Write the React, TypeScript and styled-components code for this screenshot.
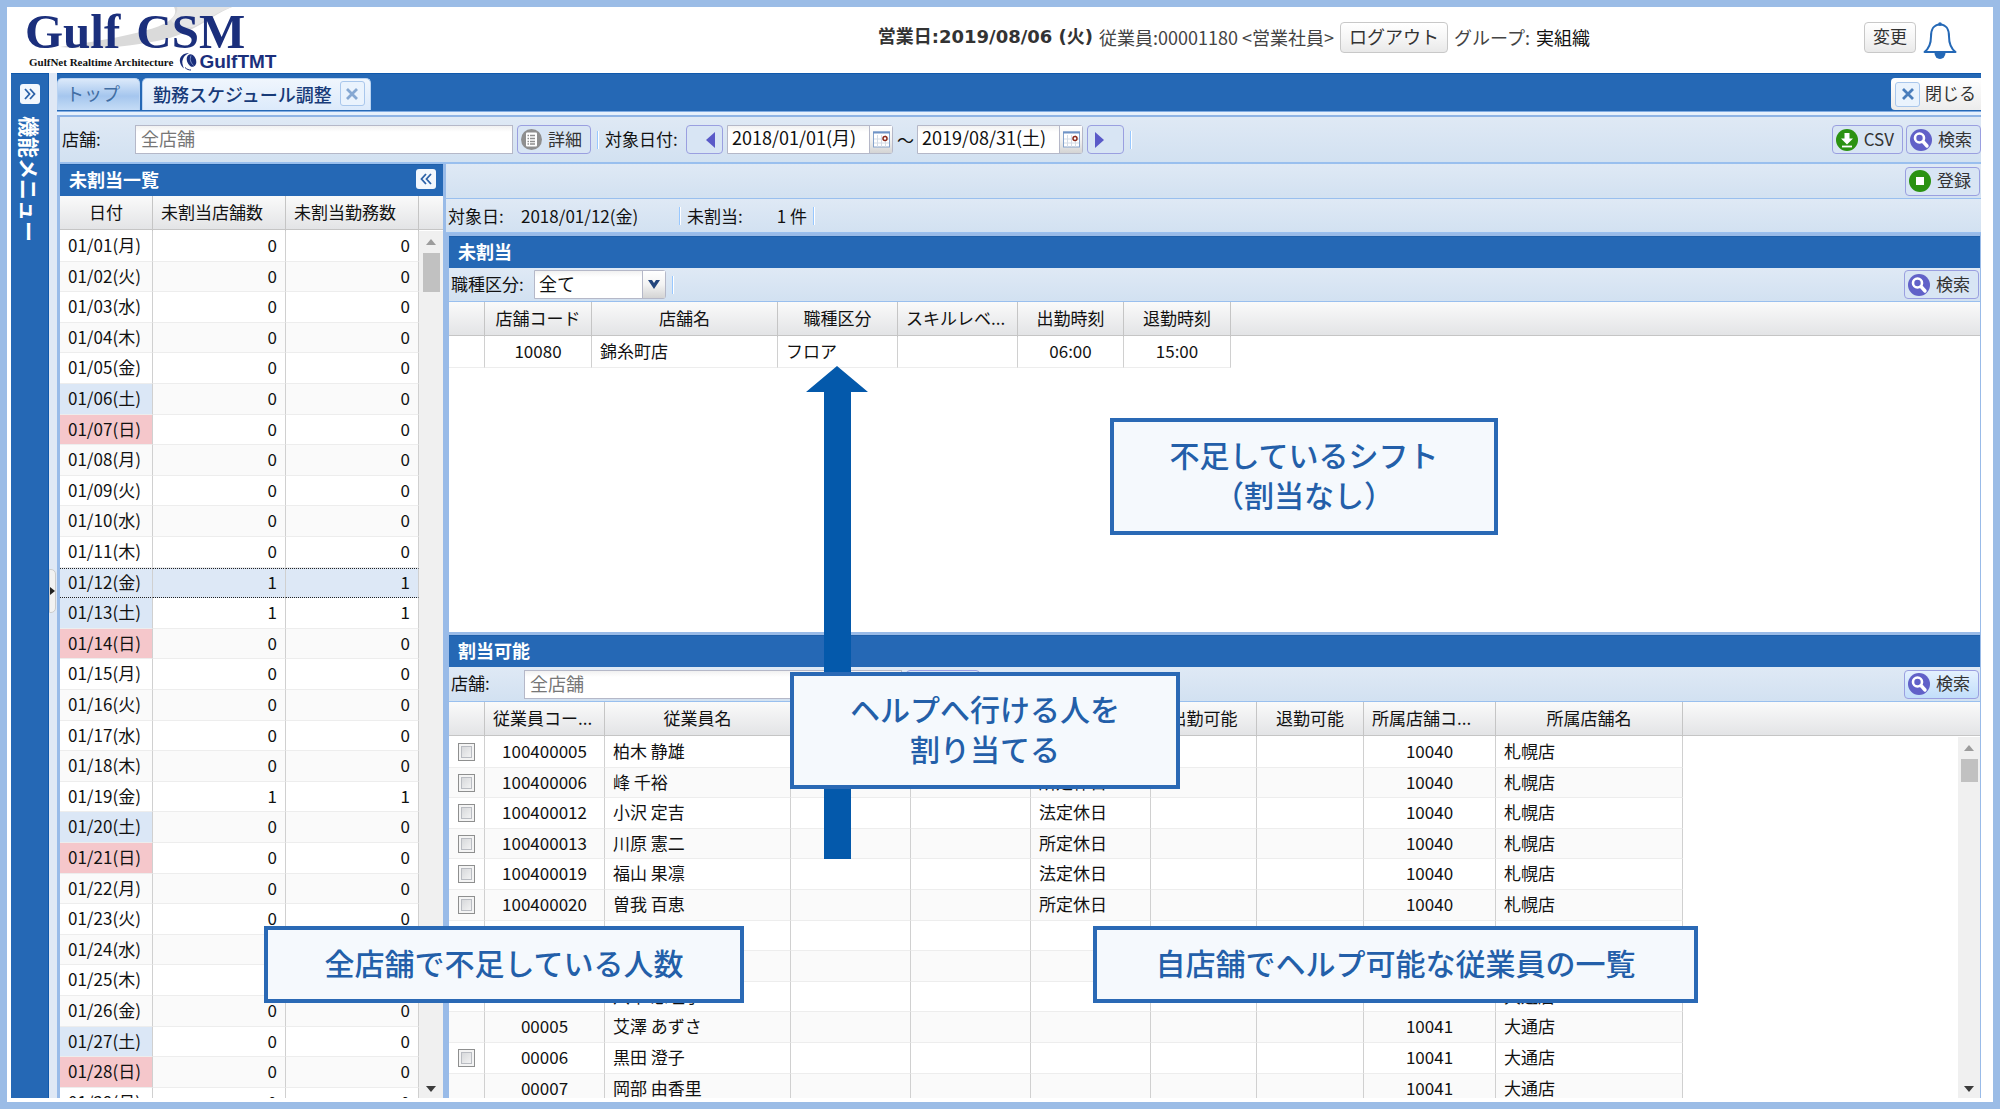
import React from "react";
import styled, { createGlobalStyle, css } from "styled-components";

const uiFont = `"Noto Sans CJK JP", "Noto Sans", sans-serif`;

const GlobalStyle = createGlobalStyle`
  * { box-sizing: border-box; }
  html, body { margin: 0; padding: 0; }
  body { font-family: ${uiFont}; font-size: 17px; line-height: 24px; color: #111; }
  button, input, select { font: inherit; color: inherit; margin: 0; }
  button { cursor: pointer; }
`;

const Frame = styled.div`
  position: relative;
  display: flex;
  flex-direction: column;
  height: 100vh;
  overflow: hidden;
  border: 7px solid #9bbce6;
  background: #fff;
  padding: 0 12px 4px 4px;
`;

/* ---------- header ---------- */

const Header = styled.header`
  display: flex;
  align-items: center;
  height: 66px;
  padding-bottom: 6px;
`;

const Logo = styled.div`
  position: relative;
  flex: 0 0 44%;
  align-self: flex-start;
  padding-left: 14px;
`;

const Swoosh = styled.svg`
  position: absolute;
  left: 46px;
  top: 0;
`;

const LogoName = styled.div`
  position: relative;
  display: flex;
  gap: 16px;
  font: 700 49px/42px "Liberation Serif", serif;
  color: #1b2f7c;
  padding-top: 4px;
`;

const LogoSub = styled.div`
  display: flex;
  align-items: center;
  gap: 6px;
  height: 18px;
  padding-left: 4px;
  font: 700 11px/16px "Liberation Serif", serif;
  color: #111;
`;

const LogoBrand = styled.span`
  display: flex;
  align-items: center;
  font: 700 19px/18px "Liberation Sans", sans-serif;
  color: #1b2f7c;
`;

const SessionInfo = styled.div`
  display: flex;
  align-items: center;
  gap: 6px;
  color: #444;
  font-size: 18px;
  white-space: nowrap;
`;

const BusinessDay = styled.strong`
  font-family: "DejaVu Sans", "Noto Sans CJK JP", sans-serif;
  font-weight: 700;
  color: #333;
`;

const GroupName = styled.span`
  color: #111;
`;

const HeaderActions = styled.div`
  display: flex;
  align-items: center;
  gap: 7px;
  margin-left: auto;
  padding-right: 24px;
`;

const PlainButton = styled.button`
  height: 31px;
  padding: 0 8px 2px;
  border: 1px solid #c8c8c8;
  border-radius: 4px;
  background: linear-gradient(#fff, #f6f6f6 50%, #e9e9e9);
  color: #333;
  line-height: 26px;
`;

const BellButton = styled.button`
  display: flex;
  padding: 8px 0 0;
  border: 0;
  background: none;
`;

/* ---------- frame of the application ---------- */

const Body = styled.div`
  display: flex;
  flex: 1;
  min-height: 0;
`;

const SideMenu = styled.nav`
  display: flex;
  flex-direction: column;
  align-items: center;
  gap: 12px;
  width: 38px;
  padding-top: 10px;
  background: #2568b5;
  border-top: 1px solid #0f58ab;
  border-right: 1px solid #0f58ab;
`;

const ToolSquare = styled.button`
  display: flex;
  align-items: center;
  justify-content: center;
  width: 20px;
  height: 20px;
  padding: 0;
  border: 0;
  border-radius: 3px;
  background: #f2f7fd;
`;

const SideTitle = styled.span`
  writing-mode: vertical-rl;
  text-orientation: sideways;
  font-weight: 700;
  font-size: 21px;
  color: #fff;
`;

const Splitter = styled.div`
  display: flex;
  flex-direction: column;
  justify-content: center;
  width: 8px;
  background: #dfe8f5;
  padding-top: 10px;
`;

const SplitHandle = styled.button`
  width: 7px;
  height: 44px;
  padding: 0;
  border: 1px solid #ccc;
  border-radius: 0 5px 5px 0;
  background: #f2f2f2;
  display: flex;
  align-items: center;
`;

const Workspace = styled.div`
  display: flex;
  flex-direction: column;
  flex: 1;
  min-width: 0;
  border-left: 3px solid #99bbe8;
`;

const TabBar = styled.div`
  display: flex;
  align-items: flex-end;
  gap: 2px;
  height: 38px;
  margin-left: -3px;
  padding-bottom: 1px;
  background: #2568b5;
  border-top: 1px solid #0f58ab;
`;

const Tab = styled.button<{ $active?: boolean }>`
  display: flex;
  align-items: center;
  gap: 8px;
  height: 32px;
  border: 1px solid #b9d3f2;
  border-bottom: 0;
  border-radius: 5px 5px 0 0;
  line-height: 28px;
  font-size: 18px;
  ${(p) =>
    p.$active
      ? css`
          padding: 0 5px 2px 10px;
          background: linear-gradient(#f0f6fd, #dceafb);
          color: #173a78;
          font-weight: 500;
        `
      : css`
          padding: 0 19px 4px 8px;
          background: linear-gradient(#dbe9fa, #a5c6ee 55%, #c5dcf6);
          color: #416da3;
        `}
`;

const CloseBox = styled.span`
  display: flex;
  align-items: center;
  justify-content: center;
  width: 25px;
  height: 25px;
  border: 1px solid #a9c7ec;
  border-radius: 3px;
  background: #eaf3fd;
`;

const CloseAll = styled.button`
  display: flex;
  align-items: center;
  gap: 5px;
  height: 32px;
  margin-left: auto;
  padding: 0 5px 0 4px;
  border: 0;
  border-radius: 4px 0 0 4px;
  background: linear-gradient(#fff, #ececec);
  color: #333;
`;

const TabStrip = styled.div`
  height: 6px;
  margin-left: -3px;
  background: #e6f0fc;
  border-top: 1px solid #7fabe3;
  border-bottom: 2px solid #8fb4e5;
`;

const Toolbar = styled.div<{ $height: number; $line?: number }>`
  display: flex;
  align-items: center;
  gap: 4px;
  flex: none;
  height: ${(p) => p.$height}px;
  padding-left: 2px;
  background: linear-gradient(#dfe9f5, #d2e1f1);
  border-bottom: ${(p) => p.$line ?? 1}px solid #99bfee;
  white-space: nowrap;
`;

const FieldLabel = styled.label<{ $width?: number }>`
  width: ${(p) => (p.$width ? `${p.$width}px` : "auto")};
  padding: 0 3px 2px 0;
`;

const Readout = styled.span<{ $width: number; $end?: boolean }>`
  width: ${(p) => p.$width}px;
  text-align: ${(p) => (p.$end ? "right" : "left")};
`;

const TextInput = styled.input<{ $width: number }>`
  width: ${(p) => p.$width}px;
  height: 29px;
  padding: 0 5px 3px;
  border: 1px solid #b5b8c8;
  background: linear-gradient(#f1f1f1, #fff 6px);
  font-size: 18px;
  &::placeholder { color: #777; opacity: 1; }
`;

const FieldGroup = styled.div<{ $width: number }>`
  display: flex;
  width: ${(p) => p.$width}px;
  height: 29px;
  border: 1px solid #b5b8c8;
  border-radius: 0 3px 3px 0;
  background: linear-gradient(#f1f1f1, #fff 6px);
  & > input, & > select {
    flex: 1;
    min-width: 0;
    padding: 0 0 5px 4px;
    border: 0;
    outline: 0;
    background: none;
    appearance: none;
    font-size: 18px;
  }
`;

const Trigger = styled.button`
  display: flex;
  align-items: center;
  justify-content: center;
  width: 23px;
  padding: 0;
  border: 0;
  border-left: 1px solid #b5b8c8;
  background: linear-gradient(#fff, #f3f3f3 50%, #d4d4d4);
`;

const Separator = styled.span`
  width: 2px;
  height: 18px;
  margin: 0 2px;
  background: #98c8ff;
  border-right: 1px solid #fff;
`;

const ToolButton = styled.button<{ $hot?: boolean }>`
  display: flex;
  align-items: center;
  justify-content: center;
  gap: 6px;
  height: 29px;
  padding: 0 8px 0 3px;
  border: 1px solid #9a9fe0;
  border-radius: 4px;
  background: ${(p) => (p.$hot ? "linear-gradient(#e4f1fe, #c2defa)" : "#d8e5f4")};
  color: #333;
  line-height: 22px;
`;

const StepButton = styled(ToolButton)<{ $back?: boolean }>`
  width: 37px;
  padding: 0 7px;
  justify-content: ${(p) => (p.$back ? "flex-end" : "flex-start")};
`;

const ToolText = styled.span`
  padding-bottom: 2px;
`;

const RightTools = styled.div<{ $inset?: number }>`
  display: flex;
  gap: 3px;
  margin-left: auto;
  padding-right: ${(p) => p.$inset ?? 0}px;
`;

/* ---------- panels ---------- */

const Columns = styled.div`
  display: flex;
  flex: 1;
  min-height: 0;
`;

const LeftPanel = styled.section`
  display: flex;
  flex-direction: column;
  flex: 0 0 386px;
  border-right: 3px solid #99bbe8;
`;

const RightArea = styled.div`
  display: flex;
  flex-direction: column;
  flex: 1;
  min-width: 0;
`;

const GridPanel = styled.section<{ $grow: number }>`
  display: flex;
  flex-direction: column;
  flex: ${(p) => p.$grow} 1 0;
  min-height: 0;
  border: solid #99bbe8;
  border-width: 3px 1px 0 3px;
`;

const PanelTitle = styled.h2`
  display: flex;
  align-items: center;
  justify-content: space-between;
  flex: none;
  height: 32px;
  margin: 0;
  padding: 0 7px 3px 9px;
  background: #2568b5;
  border-top: 1px solid #1f5fa9;
  color: #fff;
  font-size: 18px;
  font-weight: 700;
`;

const GridBody = styled.div`
  display: flex;
  flex: 1;
  min-height: 0;
  overflow: hidden;
  background: linear-gradient(#fafafa 0, #e3e4e6 33px, #c5c5c5 33px, #c5c5c5 34px, #fff 34px);
`;

const Table = styled.table`
  flex: none;
  align-self: flex-start;
  table-layout: fixed;
  width: 0;
  border-spacing: 0;
`;

const HeadCell = styled.th<{ $start?: boolean }>`
  height: 35px;
  padding: 0 8px 4px;
  border-right: 1px solid #c5c5c5;
  font-weight: 400;
  text-align: ${(p) => (p.$start ? "left" : "center")};
  white-space: nowrap;
`;

/* Row height averages 30.6px, so two rows in every five are one pixel shorter. */
const Row = styled.tr<{ $selected?: boolean }>`
  height: 31px;
  background: #fff;
  &:nth-child(5n + 2), &:nth-child(5n + 4) { height: 30px; }
  &:nth-child(even) { background: #fafafa; }
  ${(p) =>
    p.$selected &&
    css`
      &&& { background: #dde8f6; }
      & > td {
        border-top: 1px dotted #222;
        border-bottom: 1px dotted #222;
      }
    `}
`;

const tones = { plain: "transparent", sat: "#dbe7f6", sun: "#f5c7cb" };

const Cell = styled.td<{ $align?: string; $tone?: keyof typeof tones }>`
  padding: 0 8px 2px;
  border-right: 1px solid #d0d0d0;
  border-bottom: 1px solid #ededed;
  background: ${(p) => tones[p.$tone ?? "plain"]};
  text-align: ${(p) => p.$align ?? "left"};
  line-height: 20px;
  white-space: nowrap;
`;

const CheckCell = styled(Cell)`
  padding: 0 8px;
`;

const CheckBox = styled.input`
  display: block;
  appearance: none;
  width: 17px;
  height: 18px;
  margin: 0 auto;
  border: 1px solid #8e8f8f;
  background: linear-gradient(135deg, #cfd1d4, #fafafa);
  box-shadow: inset 0 0 0 2px #f4f4f4, inset 0 0 0 3px #b9bcc2;
`;

const ScrollTrack = styled.div<{ $width: number }>`
  display: flex;
  flex-direction: column;
  align-items: center;
  width: ${(p) => p.$width}px;
  margin: 35px 0 0 auto;
  padding: 8px 0 6px;
  background: #f0f0f0;
`;

const ScrollThumb = styled.div<{ $height: number }>`
  width: 17px;
  height: ${(p) => p.$height}px;
  margin: 7px 0 auto;
  background: #c1c1c1;
`;

/* ---------- annotations over the screen ---------- */

const Callout = styled.div<{ $x: number; $y: number; $w: number; $lines: number }>`
  position: absolute;
  left: ${(p) => p.$x}px;
  top: ${(p) => p.$y}px;
  width: ${(p) => p.$w}px;
  height: ${(p) => p.$lines * 40 + 37}px;
  display: flex;
  align-items: center;
  justify-content: center;
  padding-bottom: 6px;
  border: 4px solid #2a69b5;
  background: #f5f9fd;
  color: #235fa9;
  font-size: 30px;
  font-weight: 500;
  line-height: 40px;
  text-align: center;
`;

const FlowArrow = styled.svg`
  position: absolute;
  left: 799px;
  top: 359px;
`;

/* ---------- icons ---------- */

const SearchIcon = () => (
  <svg width="22" height="22" viewBox="0 0 22 22">
    <circle cx="11" cy="11" r="11" fill="#6161c8" />
    <circle cx="9.5" cy="9" r="4.5" fill="none" stroke="#fff" strokeWidth="2.6" />
    <path d="M13 12.5l4 4.5" stroke="#fff" strokeWidth="3.4" strokeLinecap="round" />
  </svg>
);

const DownloadIcon = () => (
  <svg width="22" height="22" viewBox="0 0 22 22">
    <circle cx="11" cy="11" r="11" fill="#2b9212" />
    <path d="M8.5 4h5v5.5H17L11 15.500 5 9.500h3.500z" fill="#fff" />
    <path d="M6 17.500h10" stroke="#fff" strokeWidth="1.800" />
  </svg>
);

const StopIcon = () => (
  <svg width="22" height="22" viewBox="0 0 22 22">
    <circle cx="11" cy="11" r="11" fill="#2b9212" />
    <rect x="7" y="7" width="8" height="8" fill="#fff" />
  </svg>
);

const DetailIcon = () => (
  <svg width="21" height="21" viewBox="0 0 21 21">
    <circle cx="10.500" cy="10.500" r="10.500" fill="#8f8f8f" />
    <rect x="5" y="3.500" width="11" height="14" rx="1" fill="#fff" />
    <path d="M9 6.500h5M9 9.500h5M9 12.500h5M9 15h5M6.500 6.500h1.500M6.500 9.500h1.500M6.500 12.500h1.500M6.500 15h1.500" stroke="#8f8f8f" strokeWidth="1.300" />
  </svg>
);

const CalendarIcon = () => (
  <svg width="17" height="18" viewBox="0 0 17 18">
    <rect x="0.500" y="1" width="16" height="15" fill="#fff" stroke="#86a3cc" />
    <path d="M0 1.500h17" stroke="#6f93c6" strokeWidth="2" />
    <path d="M4.500 4v12M8.500 4v12M12.500 4v12M1 8h15M1 12h15" stroke="#d3dbe6" />
    <circle cx="12" cy="7.500" r="2" fill="#fff" stroke="#8c2a1c" strokeWidth="1.500" />
  </svg>
);

const Triangle = ({ left }: { left?: boolean }) => (
  <svg width="10" height="16" viewBox="0 0 10 16">
    <path d={left ? "M10 0v16L1 8z" : "M0 0v16l9-8z"} fill="#5a5ac8" />
  </svg>
);

const CrossIcon = ({ color }: { color: string }) => (
  <svg width="12" height="12" viewBox="0 0 12 12">
    <path d="M1 1l10 10M11 1l-10 10" stroke={color} strokeWidth="2.800" />
  </svg>
);

const DoubleChevron = ({ left }: { left?: boolean }) => (
  <svg width="12" height="12" viewBox="0 0 12 12">
    <path
      d={left ? "M6 1L1.500 6 6 11M11 1L6.500 6 11 11" : "M1 1l4.500 5L1 11M6 1l4.500 5L6 11"}
      fill="none" stroke="#2c62a8" strokeWidth="1.800"
    />
  </svg>
);

const ScrollCaret = ({ down }: { down?: boolean }) => (
  <svg width="10" height="7" viewBox="0 0 10 7">
    <path d={down ? "M0 1h10L5 7z" : "M0 6h10L5 0z"} fill={down ? "#3c3c3c" : "#9c9c9c"} />
  </svg>
);

const BellIcon = () => (
  <svg width="34" height="38" viewBox="0 0 34 38">
    <path d="M17 2.500C9.500 3 8 8 8 14.500c0 8-2 12-6.500 15.500h31C28 26.500 26 22.500 26 14.500 26 8 24.500 3 17 2.500z" fill="#fff" stroke="#2468b6" strokeWidth="2" strokeLinejoin="round" />
    <path d="M11.500 31h11a5.500 6 0 0 1-11 0z" fill="#2468b6" />
    <circle cx="17" cy="2" r="1.800" fill="#2468b6" />
  </svg>
);

const BrandMark = () => (
  <svg width="20" height="18" viewBox="0 0 20 18">
    <ellipse cx="12.500" cy="7.500" rx="4.500" ry="6.500" transform="rotate(-20 12.500 7.500)" fill="#1b2f7c" />
    <path d="M10 0C4 0 0 4 1 9c0.500 3 2 5 4 6.500C3.500 12 2.500 9 4 6 5 3 7 1.500 10 0z" fill="#1b2f7c" />
    <path d="M6 14.500c2 2 4 2.500 6 2.500" stroke="#1b2f7c" fill="none" />
    <path d="M12 2.500c-1.500 4-0.500 7 2.500 10" stroke="#8fa6d6" fill="none" strokeWidth="0.800" />
  </svg>
);

/* ---------- data ---------- */

const weekday = "月火水木金土日";
const days = Array.from({ length: 29 }, (_, i) => {
  const day = i + 1;
  return {
    day,
    label: `01/${String(day).padStart(2, "0")}(${weekday[i % 7]})`,
    count: [12, 13, 19].includes(day) ? 1 : 0,
    tone: (i % 7 === 5 ? "sat" : i % 7 === 6 ? "sun" : "plain") as keyof typeof tones,
  };
});

type Column = { name: string; width: number; start?: boolean };

const dayColumns: Column[] = [
  { name: "日付", width: 93 },
  { name: "未割当店舗数", width: 133, start: true },
  { name: "未割当勤務数", width: 133, start: true },
];

const shiftColumns: Column[] = [
  { name: "", width: 36 },
  { name: "店舗コード", width: 107 },
  { name: "店舗名", width: 186 },
  { name: "職種区分", width: 120 },
  { name: "スキルレベ...", width: 120, start: true },
  { name: "出勤時刻", width: 106 },
  { name: "退勤時刻", width: 107 },
];

const staffColumns: Column[] = [
  { name: "", width: 36 },
  { name: "従業員コー...", width: 120, start: true },
  { name: "従業員名", width: 186 },
  { name: "", width: 120 },
  { name: "", width: 120 },
  { name: "", width: 120 },
  { name: "出勤可能", width: 106 },
  { name: "退勤可能", width: 107 },
  { name: "所属店舗コ...", width: 132, start: true },
  { name: "所属店舗名", width: 187 },
];

type Staff = { check?: boolean; code?: string; name?: string; leave?: string; shop?: string; shopName?: string };
const staff: Staff[] = [
  { check: true, code: "100400005", name: "柏木 静雄", shop: "10040", shopName: "札幌店" },
  { check: true, code: "100400006", name: "峰 千裕", leave: "所定休日", shop: "10040", shopName: "札幌店" },
  { check: true, code: "100400012", name: "小沢 定吉", leave: "法定休日", shop: "10040", shopName: "札幌店" },
  { check: true, code: "100400013", name: "川原 憲二", leave: "所定休日", shop: "10040", shopName: "札幌店" },
  { check: true, code: "100400019", name: "福山 果凛", leave: "法定休日", shop: "10040", shopName: "札幌店" },
  { check: true, code: "100400020", name: "曽我 百恵", leave: "所定休日", shop: "10040", shopName: "札幌店" },
  {},
  {},
  { name: "八木 恵理子", shopName: "大通店" },
  { code: "00005", name: "艾澤 あずさ", shop: "10041", shopName: "大通店" },
  { check: true, code: "00006", name: "黒田 澄子", shop: "10041", shopName: "大通店" },
  { code: "00007", name: "岡部 由香里", shop: "10041", shopName: "大通店" },
];

const TableHead = ({ columns }: { columns: Column[] }) => (
  <>
    <colgroup>
      {columns.map((c, i) => (
        <col key={i} width={c.width} />
      ))}
    </colgroup>
    <thead>
      <tr>
        {columns.map((c, i) => (
          <HeadCell key={i} $start={c.start}>{c.name}</HeadCell>
        ))}
      </tr>
    </thead>
  </>
);

const Scrollbar = ({ width, thumb }: { width: number; thumb: number }) => (
  <ScrollTrack $width={width}>
    <ScrollCaret />
    <ScrollThumb $height={thumb} />
    <ScrollCaret down />
  </ScrollTrack>
);

const DateField = ({ id, value, label }: { id: string; value: string; label: string }) => (
  <FieldGroup $width={166}>
    <input id={id} defaultValue={value} aria-label={label} />
    <Trigger aria-label="カレンダー"><CalendarIcon /></Trigger>
  </FieldGroup>
);

const SearchButton = ({ hot }: { hot?: boolean }) => (
  <ToolButton $hot={hot}><SearchIcon /><ToolText>検索</ToolText></ToolButton>
);

export default function App() {
  return (
    <>
      <GlobalStyle />
      <Frame>
        <Header>
          <Logo>
            <Swoosh width="190" height="44" viewBox="0 0 190 44">
              <path d="M3 40C40 34 100 25 113 13c6-5 6-9 4-13h58C150 10 140 26 100 34 60 42 30 42 3 40z" fill="#dadada" />
              <path d="M120 0h55C158 6 148 14 136 20c-8 1-22-2-22-8 5-4 7-8 6-12z" fill="#e6e6e6" />
            </Swoosh>
            <LogoName><span>Gulf</span><span>CSM</span></LogoName>
            <LogoSub>
              GulfNet Realtime Architecture
              <LogoBrand><BrandMark />GulfTMT</LogoBrand>
            </LogoSub>
          </Logo>
          <SessionInfo>
            <BusinessDay>営業日:2019/08/06 (火)</BusinessDay>
            <span>従業員:00001180 &lt;営業社員&gt;</span>
            <PlainButton>ログアウト</PlainButton>
            <span>グループ:</span>
            <GroupName>実組織</GroupName>
          </SessionInfo>
          <HeaderActions>
            <PlainButton>変更</PlainButton>
            <BellButton aria-label="通知"><BellIcon /></BellButton>
          </HeaderActions>
        </Header>

        <Body>
          <SideMenu>
            <ToolSquare aria-label="メニューを開く"><DoubleChevron /></ToolSquare>
            <SideTitle>機能メニュー</SideTitle>
          </SideMenu>
          <Splitter>
            <SplitHandle aria-label="開く">
              <svg width="5" height="8" viewBox="0 0 5 8"><path d="M0 0v8l5-4z" fill="#222" /></svg>
            </SplitHandle>
          </Splitter>

          <Workspace>
            <TabBar>
              <Tab>トップ</Tab>
              <Tab $active>勤務スケジュール調整<CloseBox><CrossIcon color="#86a8d2" /></CloseBox></Tab>
              <CloseAll><CloseBox><CrossIcon color="#4a7dbb" /></CloseBox><ToolText>閉じる</ToolText></CloseAll>
            </TabBar>
            <TabStrip />
            <Toolbar $height={47} $line={2}>
              <FieldLabel htmlFor="shop" $width={69}>店舗:</FieldLabel>
              <TextInput id="shop" placeholder="全店舗" $width={378} />
              <ToolButton><DetailIcon /><ToolText>詳細</ToolText></ToolButton>
              <Separator />
              <FieldLabel htmlFor="from" $width={77}>対象日付:</FieldLabel>
              <StepButton $back aria-label="前へ"><Triangle left /></StepButton>
              <DateField id="from" value="2018/01/01(月)" label="対象日付 開始" />
              <Readout $width={16}>～</Readout>
              <DateField id="to" value="2019/08/31(土)" label="対象日付 終了" />
              <StepButton aria-label="次へ"><Triangle /></StepButton>
              <Separator />
              <RightTools>
                <ToolButton><DownloadIcon /><ToolText>CSV</ToolText></ToolButton>
                <SearchButton />
              </RightTools>
            </Toolbar>

            <Columns>
              <LeftPanel>
                <PanelTitle>
                  未割当一覧
                  <ToolSquare aria-label="閉じる"><DoubleChevron left /></ToolSquare>
                </PanelTitle>
                <GridBody>
                  <Table>
                    <TableHead columns={dayColumns} />
                    <tbody>
                      {days.map((d) => (
                        <Row key={d.day} $selected={d.day === 12}>
                          <Cell $tone={d.tone}>{d.label}</Cell>
                          <Cell $align="right">{d.count}</Cell>
                          <Cell $align="right">{d.count}</Cell>
                        </Row>
                      ))}
                    </tbody>
                  </Table>
                  <Scrollbar width={24} thumb={39} />
                </GridBody>
              </LeftPanel>

              <RightArea>
                <Toolbar $height={35}>
                  <RightTools $inset={1}>
                    <ToolButton><StopIcon /><ToolText>登録</ToolText></ToolButton>
                  </RightTools>
                </Toolbar>
                <Toolbar $height={34}>
                  <Readout $width={69}>対象日:</Readout>
                  <Readout $width={152}>2018/01/12(金)</Readout>
                  <Separator />
                  <Readout $width={60}>未割当:</Readout>
                  <Readout $width={56} $end>1 件</Readout>
                  <Separator />
                </Toolbar>

                <GridPanel $grow={399}>
                  <PanelTitle>未割当</PanelTitle>
                  <Toolbar $height={34}>
                    <FieldLabel htmlFor="job" $width={79}>職種区分:</FieldLabel>
                    <FieldGroup $width={132}>
                      <select id="job" defaultValue="all"><option value="all">全て</option></select>
                      <Trigger aria-label="職種区分を開く">
                        <svg width="12" height="9" viewBox="0 0 12 9"><path d="M0 0h4l2 3 2-3h4L6 9z" fill="#23457c" /></svg>
                      </Trigger>
                    </FieldGroup>
                    <Separator />
                    <RightTools $inset={1}><SearchButton /></RightTools>
                  </Toolbar>
                  <GridBody>
                    <Table>
                      <TableHead columns={shiftColumns} />
                      <tbody>
                        <Row>
                          <Cell />
                          <Cell $align="center">10080</Cell>
                          <Cell>錦糸町店</Cell>
                          <Cell>フロア</Cell>
                          <Cell />
                          <Cell $align="center">06:00</Cell>
                          <Cell $align="center">15:00</Cell>
                        </Row>
                      </tbody>
                    </Table>
                  </GridBody>
                </GridPanel>

                <GridPanel $grow={466}>
                  <PanelTitle>割当可能</PanelTitle>
                  <Toolbar $height={35}>
                    <FieldLabel htmlFor="shop2" $width={69}>店舗:</FieldLabel>
                    <TextInput id="shop2" placeholder="全店舗" $width={378} />
                    <ToolButton><DetailIcon /><ToolText>詳細</ToolText></ToolButton>
                    <RightTools $inset={1}><SearchButton hot /></RightTools>
                  </Toolbar>
                  <GridBody>
                    <Table>
                      <TableHead columns={staffColumns} />
                      <tbody>
                        {staff.map((s, i) => (
                          <Row key={i}>
                            <CheckCell>{s.check && <CheckBox type="checkbox" aria-label={s.name} />}</CheckCell>
                            <Cell $align="center">{s.code}</Cell>
                            <Cell>{s.name}</Cell>
                            <Cell />
                            <Cell />
                            <Cell>{s.leave}</Cell>
                            <Cell />
                            <Cell />
                            <Cell $align="center">{s.shop}</Cell>
                            <Cell>{s.shopName}</Cell>
                          </Row>
                        ))}
                      </tbody>
                    </Table>
                    <Scrollbar width={22} thumb={23} />
                  </GridBody>
                </GridPanel>
              </RightArea>
            </Columns>
          </Workspace>
        </Body>

        <FlowArrow width="62" height="493" viewBox="0 0 62 493">
          <path d="M31 0l31 26H45v467H18V26H0z" fill="#0459ab" />
        </FlowArrow>
        <Callout $x={1103} $y={411} $w={388} $lines={2}>不足しているシフト<br />（割当なし）</Callout>
        <Callout $x={783} $y={665} $w={390} $lines={2}>ヘルプへ行ける人を<br />割り当てる</Callout>
        <Callout $x={257} $y={919} $w={480} $lines={1}>全店舗で不足している人数</Callout>
        <Callout $x={1086} $y={919} $w={605} $lines={1}>自店舗でヘルプ可能な従業員の一覧</Callout>
      </Frame>
    </>
  );
}
